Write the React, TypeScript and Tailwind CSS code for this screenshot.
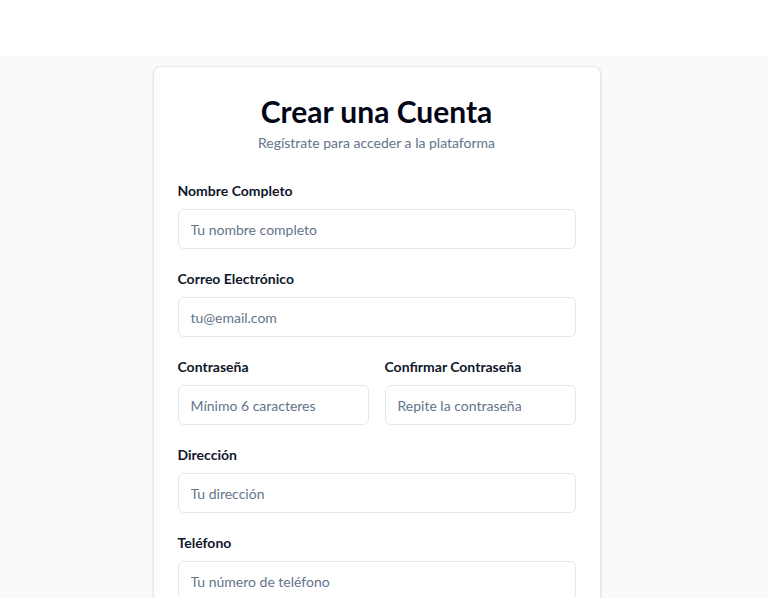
import React from "react";

function Field({ label, placeholder, type = "text" }: { label: string; placeholder: string; type?: string }) {
  return (
    <div className="flex flex-col">
      <label className="text-sm leading-5 font-bold text-[#0f172a] mb-2">{label}</label>
      <input
        type={type}
        placeholder={placeholder}
        className="h-10 w-full rounded-md border border-[#e2e8f0] bg-white px-3 text-sm text-[#0f172a] placeholder:text-[#64748b] outline-none"
      />
    </div>
  );
}

export default function App() {
  return (
    <div className="min-h-screen bg-[#f8fafc]" style={{ fontFamily: 'Lato, "Noto Sans", sans-serif' }}>
      <div className="h-14 bg-white" />
      <div className="flex justify-center pt-2.5 pr-[15px]">
        <div className="w-[448px] rounded-lg border border-[#e2e8f0] bg-white px-6 pt-6 pb-6 shadow-sm">
          <h1 className="mt-0.5 text-center text-3xl leading-9 font-bold text-[#020617]">Crear una Cuenta</h1>
          <p className="mt-1 text-center text-sm leading-5 text-[#64748b]">Regístrate para acceder a la plataforma</p>
          <form className="mt-7 flex flex-col gap-5">
            <Field label="Nombre Completo" placeholder="Tu nombre completo" />
            <Field label="Correo Electrónico" placeholder="tu@email.com" type="email" />
            <div className="grid grid-cols-2 gap-4">
              <Field label="Contraseña" placeholder="Mínimo 6 caracteres" type="password" />
              <Field label="Confirmar Contraseña" placeholder="Repite la contraseña" type="password" />
            </div>
            <Field label="Dirección" placeholder="Tu dirección" />
            <Field label="Teléfono" placeholder="Tu número de teléfono" />
          </form>
        </div>
      </div>
    </div>
  );
}
